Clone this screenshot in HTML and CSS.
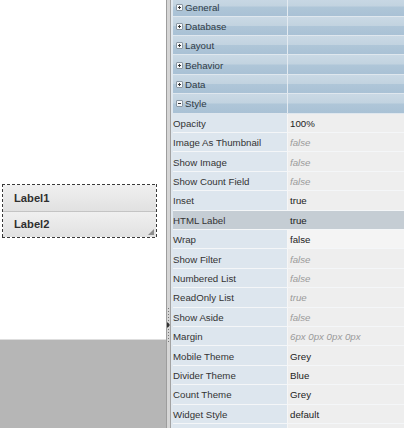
FILE: index.html
```html
<!DOCTYPE html>
<html>
<head>
<meta charset="utf-8">
<link rel="stylesheet" href="styles.css">
</head>
<body>
<div class="canvas">
  <div class="design">
    <div class="listview">
      <div class="item">Label1</div>
      <div class="item">Label2</div>
      <span class="grip"></span>
    </div>
  </div>
  <div class="gray"></div>
</div>
<div class="splitter"><span class="sgrip"></span></div>
<div class="panel">
  <div class="grid">
    <div class="group"><div class="gname"><span class="tog plus"></span>General</div><div class="gval"></div></div>
    <div class="group"><div class="gname"><span class="tog plus"></span>Database</div><div class="gval"></div></div>
    <div class="group"><div class="gname"><span class="tog plus"></span>Layout</div><div class="gval"></div></div>
    <div class="group"><div class="gname"><span class="tog plus"></span>Behavior</div><div class="gval"></div></div>
    <div class="group"><div class="gname"><span class="tog plus"></span>Data</div><div class="gval"></div></div>
    <div class="group"><div class="gname"><span class="tog minus"></span>Style</div><div class="gval"></div></div>
    <div class="prop"><div class="name">Opacity</div><div class="val">100%</div></div>
    <div class="prop"><div class="name">Image As Thumbnail</div><div class="val def">false</div></div>
    <div class="prop"><div class="name">Show Image</div><div class="val def">false</div></div>
    <div class="prop"><div class="name">Show Count Field</div><div class="val def">false</div></div>
    <div class="prop"><div class="name">Inset</div><div class="val">true</div></div>
    <div class="prop selected"><div class="name">HTML Label</div><div class="val">true</div></div>
    <div class="prop hover"><div class="name">Wrap</div><div class="val">false</div></div>
    <div class="prop"><div class="name">Show Filter</div><div class="val def">false</div></div>
    <div class="prop"><div class="name">Numbered List</div><div class="val def">false</div></div>
    <div class="prop"><div class="name">ReadOnly List</div><div class="val def">true</div></div>
    <div class="prop"><div class="name">Show Aside</div><div class="val def">false</div></div>
    <div class="prop"><div class="name">Margin</div><div class="val def">6px 0px 0px 0px</div></div>
    <div class="prop"><div class="name">Mobile Theme</div><div class="val">Grey</div></div>
    <div class="prop"><div class="name">Divider Theme</div><div class="val">Blue</div></div>
    <div class="prop"><div class="name">Count Theme</div><div class="val">Grey</div></div>
    <div class="prop"><div class="name">Widget Style</div><div class="val">default</div></div>
    <div class="prop"><div class="name"></div><div class="val"></div></div>
  </div>
</div>
</body>
</html>
```
FILE: styles.css
```css
html, body {
  margin: 0;
  padding: 0;
}
body {
  width: 404px;
  height: 428px;
  overflow: hidden;
  display: flex;
  font-family: "Liberation Sans", Arial, sans-serif;
  background: #ffffff;
}
.canvas {
  width: 166px;
  display: flex;
  flex-direction: column;
}
.design {
  height: 340px;
  background: #ffffff;
  border-bottom: 1px solid #dedede;
  padding: 184px 0 0 2px;
  box-sizing: border-box;
}
.gray {
  flex: 1;
  background: #b6b6b6;
}
.listview {
  position: relative;
  width: 155px;
  height: 54px;
  box-sizing: border-box;
  padding: 1px;
  display: flex;
  flex-direction: column;
  background:
    repeating-linear-gradient(90deg, #3a3a3a 0 3px, transparent 3px 5px) top left / 100% 1px no-repeat,
    repeating-linear-gradient(90deg, #3a3a3a 0 3px, transparent 3px 5px) bottom left / 100% 1px no-repeat,
    repeating-linear-gradient(180deg, #3a3a3a 0 3px, transparent 3px 5px) top left / 1px 100% no-repeat,
    repeating-linear-gradient(180deg, #3a3a3a 0 3px, transparent 3px 5px) top right / 1px 100% no-repeat,
    #ffffff;
}
.item {
  flex: 1;
  display: flex;
  align-items: center;
  padding-left: 11px;
  font-size: 11.2px;
  font-weight: bold;
  color: #2f2f2f;
  background: linear-gradient(#f0f0f0, #e1e1e1);
}
.item + .item {
  border-top: 1px solid #c4c4c4;
}
.grip {
  position: absolute;
  right: 3px;
  bottom: 3px;
  width: 0;
  height: 0;
  border-left: 6px solid transparent;
  border-bottom: 6px solid #8c8c8c;
}
.splitter {
  position: relative;
  width: 3px;
  border-left: 1px solid #9d9d9d;
  border-right: 1px solid #a3a3a3;
  background: #d6d6d6;
}
.sgrip {
  position: absolute;
  left: 1px;
  top: 308px;
  width: 1px;
  height: 36px;
  background: repeating-linear-gradient(180deg, #777 0 1px, transparent 1px 3px);
}
.sgrip::after {
  content: "";
  position: absolute;
  left: -1px;
  top: 14px;
  width: 0;
  height: 0;
  border-top: 3px solid transparent;
  border-bottom: 3px solid transparent;
  border-left: 3px solid #333;
}
.panel {
  flex: 1;
  background: #e0e8ef;
  padding-left: 2px;
  overflow: hidden;
}
.grid {
  margin-top: -2.7px;
  font-size: 9.7px;
  color: #333;
}
.group, .prop {
  display: grid;
  grid-template-columns: 114px 1fr;
  height: 19.4px;
  box-sizing: border-box;
}
.group {
  border-bottom: 1px solid #dfe7ee;
  background: linear-gradient(#cad9e5 0%, #c2d3e0 48%, #afc6d8 52%, #a9c1d5 100%);
}
.gname {
  display: flex;
  align-items: center;
  padding-left: 3px;
  padding-top: 1px;
  color: #2e3a44;
}
.gval {
  border-left: 1px solid #e4ebf1;
}
.tog {
  position: relative;
  width: 7px;
  height: 7px;
  box-sizing: border-box;
  border: 1px solid #8a98a4;
  border-radius: 1px;
  background: #f6f8fa;
  margin-right: 2px;
}
.tog::before, .plus::after {
  content: "";
  position: absolute;
  background: #333;
}
.tog::before {
  left: 1px;
  top: 2px;
  width: 3px;
  height: 1px;
}
.plus::after {
  left: 2px;
  top: 1px;
  width: 1px;
  height: 3px;
}
.prop {
  border-bottom: 1px solid #f4f6f8;
}
.name {
  background: #dde6ee;
  display: flex;
  align-items: center;
  padding-left: 0;
  padding-top: 1px;
  color: #333;
}
.val {
  background: #eeeeee;
  border-left: 1px solid #f6f6f6;
  display: flex;
  align-items: center;
  padding-left: 2px;
  padding-top: 1px;
  color: #222;
}
.val.def {
  font-style: italic;
  color: #9a9a9a;
}
.hover .val {
  background: #f4f4f4;
}
.selected .name, .selected .val {
  background: #c5cdd4;
}
.selected .val {
  border-left-color: #c5cdd4;
}
```
